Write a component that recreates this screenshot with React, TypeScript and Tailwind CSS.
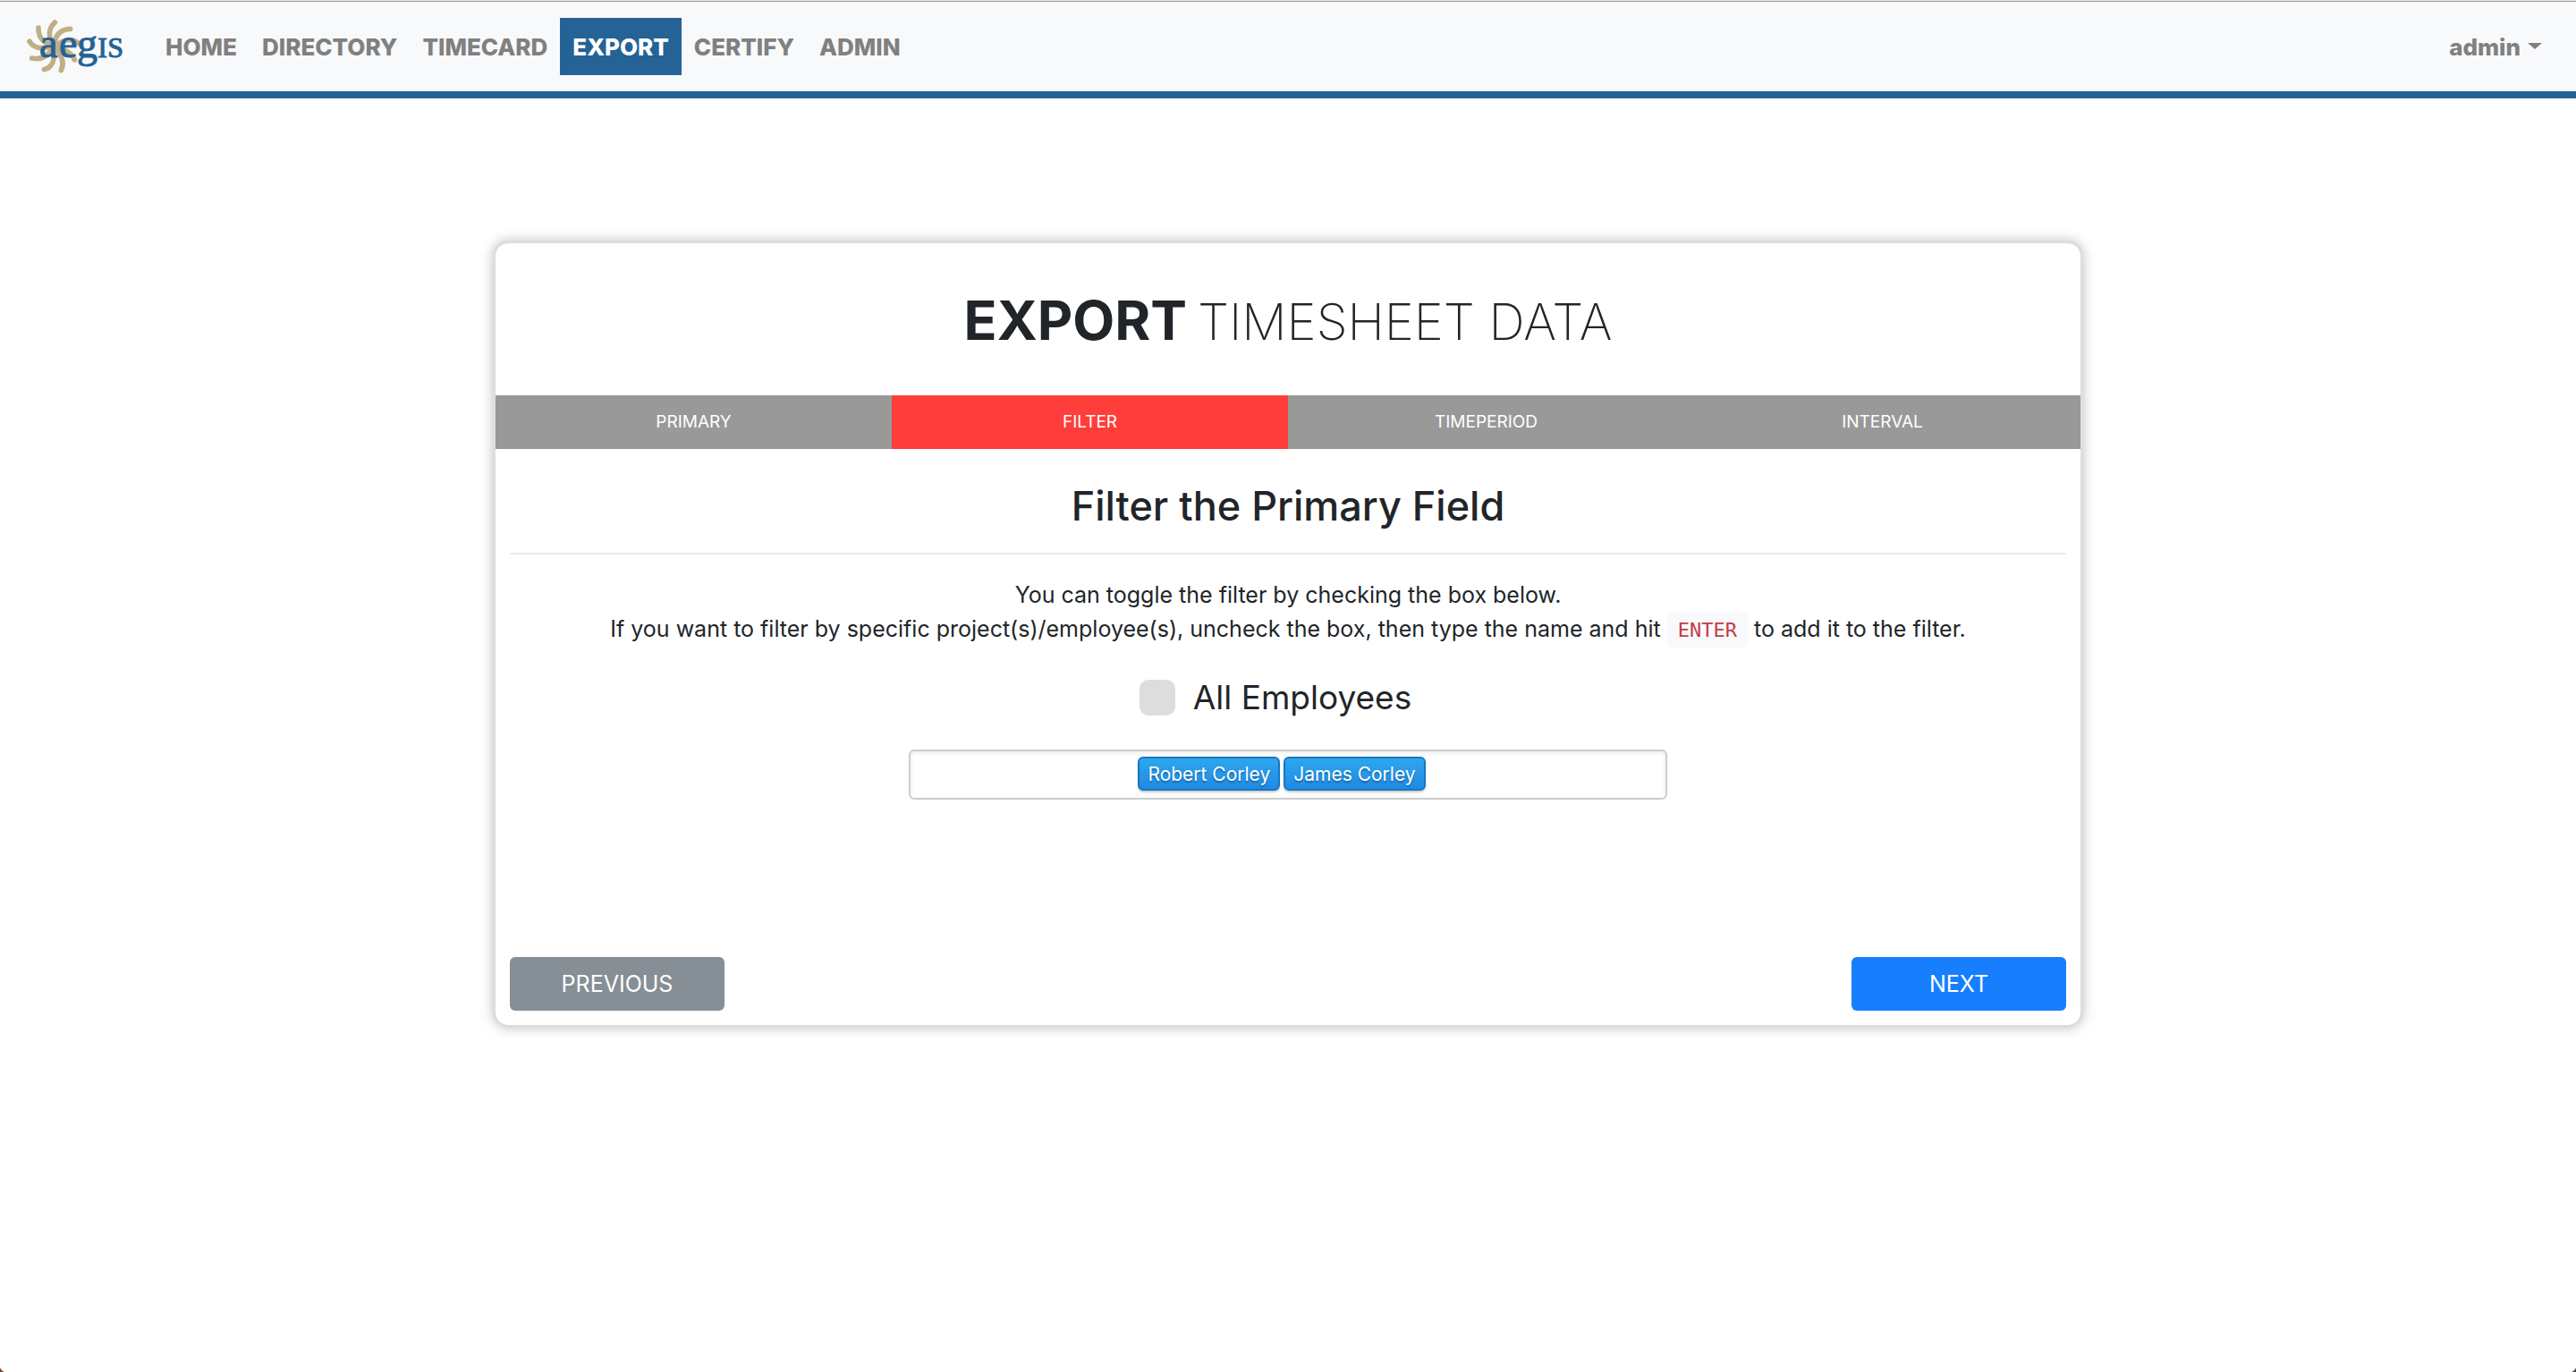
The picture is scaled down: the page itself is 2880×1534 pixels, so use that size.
const NAV = ["HOME", "DIRECTORY", "TIMECARD", "EXPORT", "CERTIFY", "ADMIN"];
const STEPS = ["PRIMARY", "FILTER", "TIMEPERIOD", "INTERVAL"];
const EMPLOYEES = ["Robert Corley", "James Corley"];

function Logo() {
  return (
    <svg viewBox="84 60 330 192" className="h-16 w-[110px]" role="img" aria-label="aegis">
      <g fill="none" stroke="#c0af86" strokeWidth="17" strokeLinecap="round">
        <path d="M184 75C160 98 162 122 178 150" />
        <path d="M236 97C204 98 186 116 182 150" />
        <path d="M129 93C128 122 140 140 172 152" />
        <path d="M99 139C114 162 136 166 172 156" />
        <path d="M107 195C140 202 160 190 174 164" />
        <path d="M148 233C176 226 184 204 180 168" />
        <path d="M205 236C218 208 206 184 186 164" />
        <path d="M250 201C246 182 220 166 190 160" />
        <path d="M264 146C244 128 216 130 190 152" />
      </g>
      <g fill="#256295" stroke="#256295" strokeWidth="3" fontFamily="'Liberation Serif', serif" fontWeight="400">
        <text x="132" y="192" fontSize="138">a</text>
        <text x="198" y="192" fontSize="138">e</text>
        <text x="258" y="192" fontSize="138">g</text>
        <text x="328" y="192" fontSize="96">I</text>
        <text x="361" y="192" fontSize="96">S</text>
      </g>
    </svg>
  );
}

export default function App() {
  return (
    <div className="relative min-h-screen bg-white font-['Inter','Liberation_Sans',sans-serif] text-[25px] leading-[38px] text-[#212529]">
      <header className="border-b-8 border-[#256295] bg-[#f8f9fa]">
        <div className="h-px bg-[#e6e6e6]" />
        <div className="h-px bg-[#999999]" />
        <div className="flex h-[100px] items-center pr-[38px] pl-7 text-[26px] font-extrabold text-[#808080]">
          <a href="#" className="mr-[33px]">
            <Logo />
          </a>
          <nav className="flex items-center">
            {NAV.map((item) => (
              <a
                key={item}
                href="#"
                className={
                  item === "EXPORT"
                    ? "flex h-16 items-center bg-[#256295] px-3.5 pt-0.5 text-white"
                    : "flex h-16 items-center px-3.5 pt-0.5"
                }
              >
                {item}
              </a>
            ))}
          </nav>
          <button type="button" className="ml-auto flex items-center gap-2 pt-0.5">
            admin
            <svg viewBox="0 0 16 7" className="mb-1 h-[7px] w-4" aria-hidden="true">
              <path d="M0 0H16L8 7Z" fill="#808080" />
            </svg>
          </button>
        </div>
      </header>

      <main className="mx-auto mt-[162px] max-w-[1772px] overflow-clip rounded-[14px] shadow-[0_0_0_3px_#dddddd,0_0_14px_3px_rgba(0,0,0,0.25)]">
        <h1 className="flex h-[170px] items-baseline justify-center gap-3 pt-[46px] text-[56px] leading-[80px] font-extralight whitespace-nowrap">
          <strong className="text-[61px] font-bold">EXPORT</strong> TIMESHEET DATA
        </h1>

        <ol className="grid grid-cols-4 bg-[#999999] text-center text-[19px] leading-[60px] text-white">
          {STEPS.map((step) => (
            <li key={step} className={step === "FILTER" ? "bg-[#ff3d3a]" : ""}>
              {step}
            </li>
          ))}
        </ol>

        <form className="px-4 pb-4" onSubmit={(e) => e.preventDefault()}>
          <h2 className="border-b-2 border-[#e8e8e8] pt-9 pb-6 text-center text-[45px] leading-[56px] font-medium">
            Filter the Primary Field
          </h2>
          <p className="pt-[26px] text-center">
            You can toggle the filter by checking the box below.
            <br />
            If you want to filter by specific project(s)/employee(s), uncheck the box, then type the name and hit{" "}
            <code className="rounded-md bg-[#f8f9fa] px-3 py-[7px] font-['DejaVu_Sans_Mono',monospace] text-[22px] leading-none text-[#c63a46]">
              ENTER
            </code>{" "}
            to add it to the filter.
          </p>

          <div className="mt-[38px] flex items-center justify-center gap-5 pr-7 text-[37px] leading-10">
            <input
              id="all-employees"
              type="checkbox"
              className="size-10 appearance-none rounded-[10px] bg-[#dddddd] checked:bg-[#256295]"
            />
            <label htmlFor="all-employees">All Employees</label>
          </div>

          <div className="mx-auto mt-[38px] flex h-14 max-w-[848px] items-start justify-center gap-1 rounded-md border-2 border-[#cccccc] pt-1.5 pr-3.5 shadow-[inset_0_2px_4px_rgba(0,0,0,0.08)]">
            {EMPLOYEES.map((name) => (
              <button
                key={name}
                type="button"
                className="h-[38px] rounded-md border-2 border-[#1777c0] bg-linear-to-b from-[#2ea7ee] to-[#2089e4] px-[9px] pt-0.5 text-[21px] leading-8 text-white shadow-[0_2px_2px_rgba(0,0,0,0.2)] text-shadow-[0_2px_2px_rgba(0,0,0,0.3)]"
              >
                {name}
              </button>
            ))}
          </div>

          <div className="mt-44 flex justify-between text-[25px] text-white">
            <button type="button" className="h-[60px] w-60 rounded-md bg-[#868e96]">
              PREVIOUS
            </button>
            <button type="submit" className="h-[60px] w-60 rounded-md bg-[#177ffd]">
              NEXT
            </button>
          </div>
        </form>
      </main>

      <span className="absolute bottom-0 left-0 size-2 bg-[radial-gradient(circle_at_top_right,transparent_8px,#6b4a35_9px)]" />
      <span className="absolute right-0 bottom-0 size-2 bg-[radial-gradient(circle_at_top_left,transparent_8px,#4a4a50_9px)]" />
    </div>
  );
}
